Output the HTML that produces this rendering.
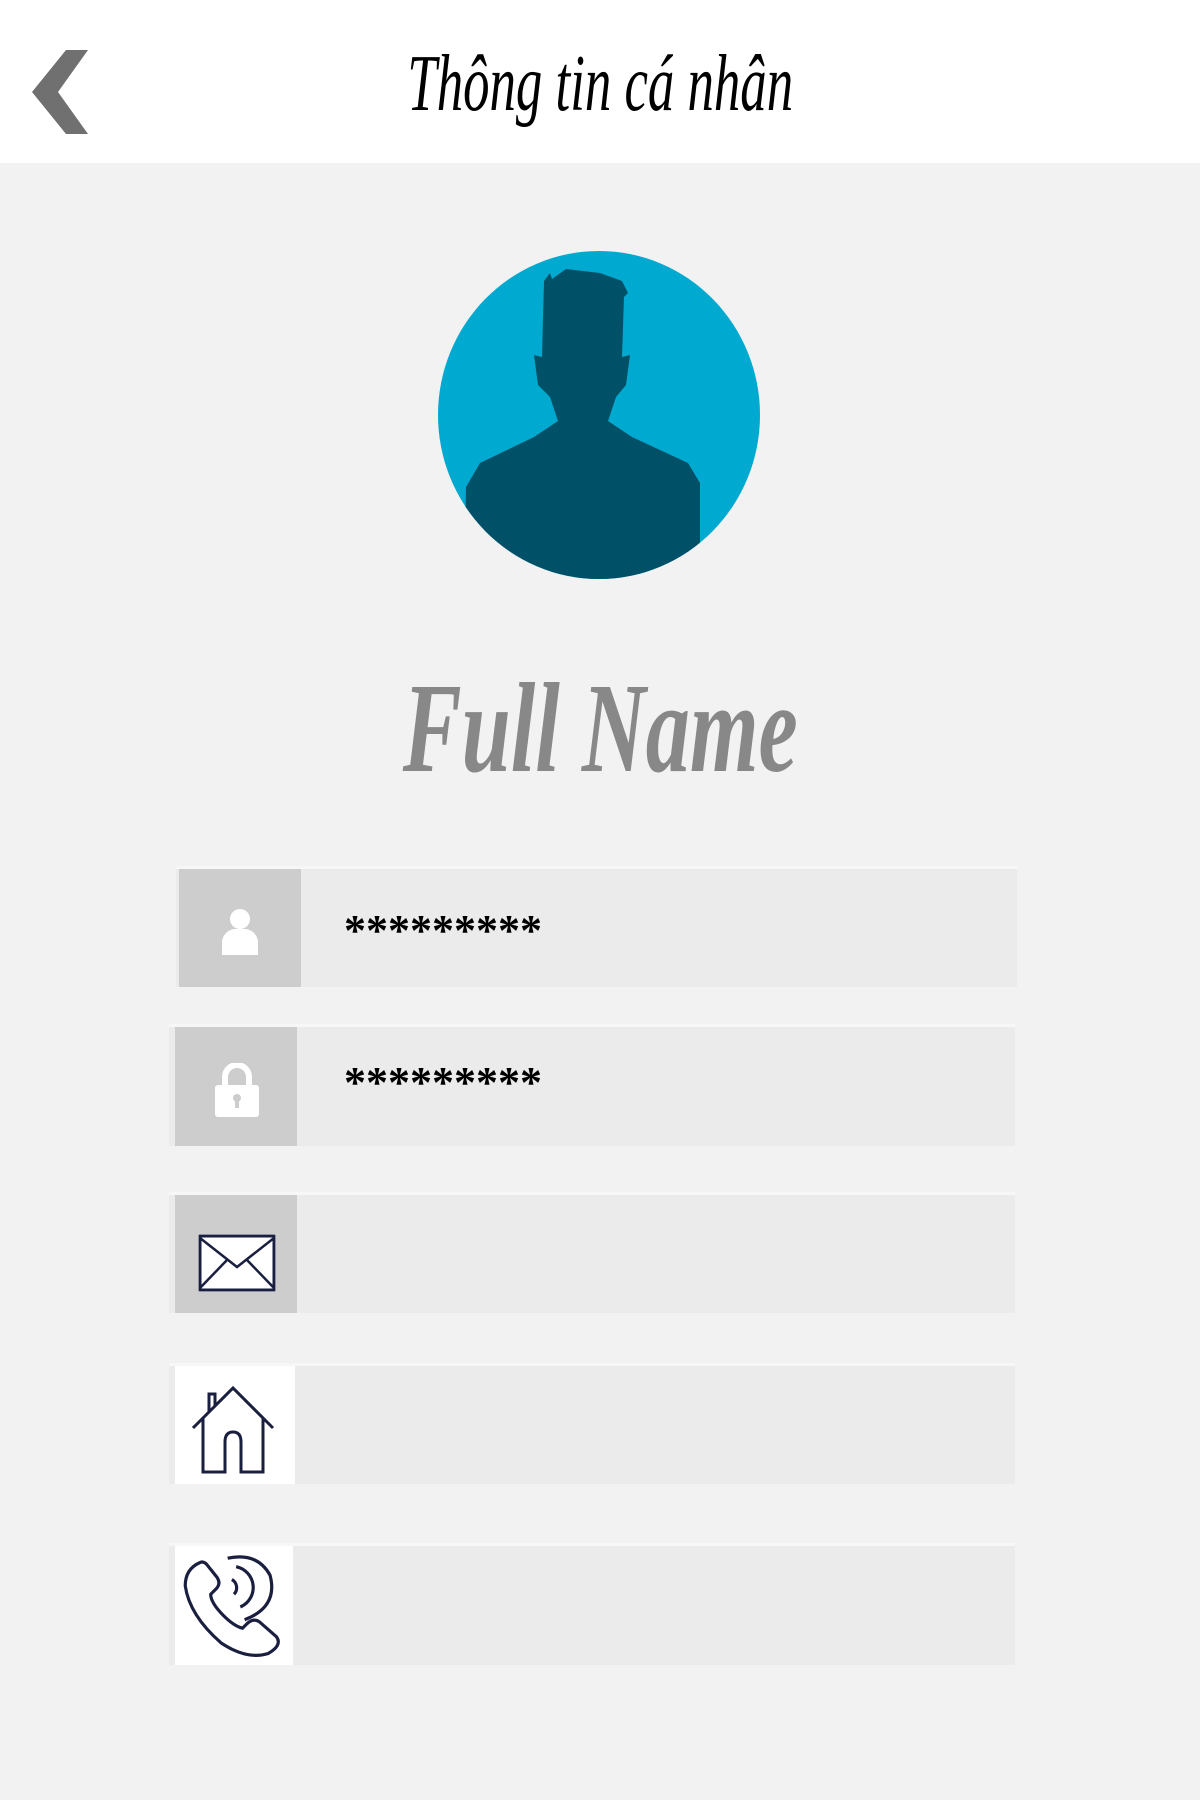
<!DOCTYPE html>
<html><head><meta charset="utf-8"><style>
body{margin:0;width:1200px;height:1800px;background:#f2f2f2;position:relative;overflow:hidden;font-family:"Liberation Serif",serif}
.hdr{position:absolute;left:0;top:0;width:1200px;height:163px;background:#fff}
.title{position:absolute;left:0;width:1200px;top:34px;text-align:center;font-style:italic;font-size:80px;line-height:100px;color:#000}
.title span{display:inline-block;transform:scaleX(0.66)}
.fn{position:absolute;left:0;width:1200px;top:658px;text-align:center;font-style:italic;font-weight:bold;font-size:128px;line-height:140px;color:#888}
.fn span{display:inline-block;transform:scaleX(0.69)}
.row{position:absolute;background:#ebebeb;border-top:3px solid #f7f7f7;box-sizing:border-box}
.ic{position:absolute;left:6px;top:0;bottom:0;width:122px;background:#cdcdcd}
.ic.w{background:#fff}
.ast{position:absolute;left:170px;top:36px;font-family:"Liberation Serif",serif;font-weight:bold;font-size:44px;letter-spacing:0;color:#000}
</style></head><body>
<div class="hdr"></div>
<svg style="position:absolute;left:28px;top:48px" width="64" height="88" viewBox="0 0 64 88"><path d="M60 2 L38 2 L4 44 L38 86 L60 86 L30 44 Z" fill="#707070"/></svg>
<div class="title"><span>Thông tin cá nhân</span></div>
<svg style="position:absolute;left:438px;top:251px" width="322" height="328" viewBox="0 0 322 328">
<defs><clipPath id="c"><ellipse cx="161" cy="164" rx="161" ry="164"/></clipPath></defs>
<ellipse cx="161" cy="164" rx="161" ry="164" fill="#00a9d0"/>
<g clip-path="url(#c)" fill="#005168">
<path d="M106 30 L112 22 L114 28 L128 18 L162 22 L184 30 L190 42 L186 46 L184 106 L192 104 L188 134 L178 146 L170 170 L194 186 L250 212 L262 232 L262 340 L26 340 L28 236 L42 212 L96 186 L120 170 L112 146 L100 134 L96 104 L104 106 Z"/>
</g></svg>
<div class="fn"><span>Full Name</span></div>

<div class="row" style="left:176px;top:866px;width:841px;height:121px"><div class="ic" style="left:3px">
<svg style="position:absolute;left:41px;top:38px" width="40" height="48" viewBox="0 0 40 48"><circle cx="20" cy="12" r="10" fill="#fff"/><path d="M2 48 L2 34 Q4 24 14 22 L26 22 Q36 24 38 34 L38 48Z" fill="#fff"/></svg></div>
<div class="ast" style="left:168px">*********</div></div>

<div class="row" style="left:169px;top:1024px;width:846px;height:122px"><div class="ic">
<svg style="position:absolute;left:40px;top:36px" width="44" height="54" viewBox="0 0 44 54"><path d="M10 24 V14 a12 12 0 0 1 24 0 V24" stroke="#fff" stroke-width="6" fill="none"/><rect x="0" y="22" width="44" height="32" rx="3" fill="#fff"/><circle cx="22" cy="35" r="4" fill="#ccc"/><rect x="20" y="36" width="4" height="9" fill="#ccc"/></svg></div>
<div class="ast" style="left:175px;top:30px">*********</div></div>

<div class="row" style="left:169px;top:1192px;width:846px;height:121px"><div class="ic">
<svg style="position:absolute;left:22px;top:38px" width="80" height="60" viewBox="0 0 80 60"><rect x="1" y="1" width="78" height="58" fill="#fff"/><rect x="3" y="3" width="74" height="54" fill="none" stroke="#1a1f40" stroke-width="3"/><path d="M3 5 L40 34 L77 5 M3 55 L30 27 M77 55 L50 27" fill="none" stroke="#1a1f40" stroke-width="2.5"/></svg></div></div>

<div class="row" style="left:169px;top:1363px;width:846px;height:121px"><div class="ic w" style="width:120px">
<svg style="position:absolute;left:14px;top:14px" width="90" height="96" viewBox="0 0 90 96"><path d="M4 48 L44 8 L84 48 M14 38 V92 H36 V62 Q36 52 44 52 Q52 52 52 62 V92 H74 V38 M20 32 V14 H26 V26" fill="none" stroke="#1a1f40" stroke-width="3"/></svg></div></div>

<div class="row" style="left:169px;top:1543px;width:846px;height:122px"><div class="ic w" style="width:118px">
<svg style="position:absolute;left:6px;top:8px" width="106" height="106" viewBox="0 0 100 100"><path d="M18 8 Q4 14 4 30 Q8 58 38 84 Q62 100 82 94 Q96 86 90 78 L74 64 Q68 60 62 66 L58 70 Q50 68 40 58 Q28 46 28 38 L33 33 Q38 28 34 22 L26 12 Q22 6 18 8Z" fill="none" stroke="#1a1f40" stroke-width="3"/><path d="M50 38 A9 9 0 0 0 48 24 M56 50 A20 20 0 0 0 52 12 M60 62 Q92 50 84 20 Q72 -2 44 4" fill="none" stroke="#1a1f40" stroke-width="3"/></svg></div></div>
</body></html>
